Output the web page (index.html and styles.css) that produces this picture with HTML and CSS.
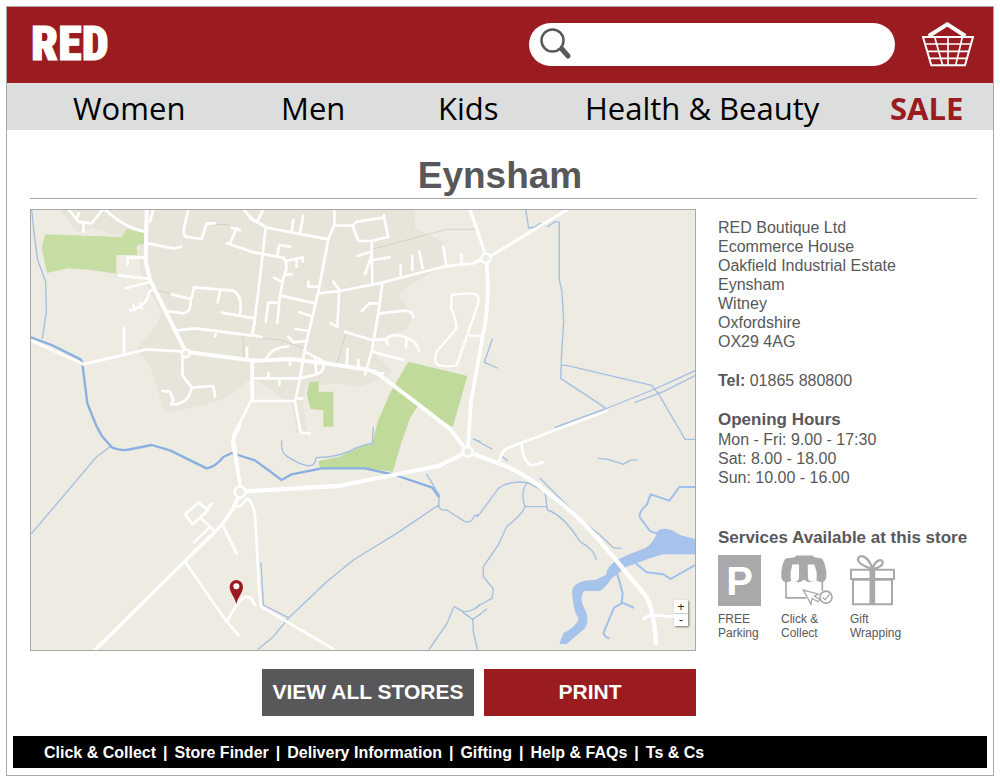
FILE: index.html
```html
<!DOCTYPE html>
<html lang="en">
<head>
<meta charset="utf-8">
<meta name="viewport" content="width=device-width, initial-scale=1">
<title>RED - Eynsham store</title>
<link rel="stylesheet" href="styles.css">
</head>
<body>
<div class="page">
  <header class="masthead">
    <a class="logo" href="#">RED</a>
    <div class="tools">
      <form class="search" role="search">
        <button class="search-go" type="submit" aria-label="Search">
          <svg viewBox="0 0 32 32" width="32" height="32" aria-hidden="true">
            <path d="M21 20L28 28" stroke="#58585a" stroke-width="5" stroke-linecap="round"/>
            <circle cx="12.500" cy="12.500" r="11" fill="#fff" stroke="#58585a" stroke-width="2.500"/>
          </svg>
        </button>
        <input class="search-box" type="text" aria-label="Search the shop">
      </form>
      <a class="basket" href="#" aria-label="Basket">
        <svg viewBox="0 0 156 135" width="52" height="45" fill="none" stroke="#fff" aria-hidden="true">
          <path d="M20 42L76 7L130 42" stroke-width="12"/>
          <path d="M3 45H153L129 130H28Z" stroke-width="6"/>
          <path d="M38 45L62 130M78 45V130M121 45L101 130" stroke-width="5"/>
          <path d="M9 66H147M15 88H141M22 109H134" stroke-width="5"/>
        </svg>
      </a>
    </div>
  </header>

  <nav class="menu" aria-label="Departments">
    <a href="#">Women</a>
    <a href="#">Men</a>
    <a href="#">Kids</a>
    <a href="#">Health &amp; Beauty</a>
    <a class="sale" href="#">SALE</a>
  </nav>

  <main class="content">
    <h1 class="title">Eynsham</h1>
    <div class="columns">
      <section class="left">
        <div class="map">
          <svg class="map-art" viewBox="0 0 1992 1320" role="img" aria-label="Map of Eynsham" fill="none" stroke-linecap="round" stroke-linejoin="round">
            <rect width="1992" height="1320" fill="#eeebe3"/>
            <!-- built-up area -->
            <g transform="translate(-18 -15)" fill="#e7e4da">
              <path d="M105 12L135 50L160 82L200 70L290 95L340 90L345 200L375 260L410 325L395 360L335 430L375 480L400 560L415 610L440 625L480 612L540 600L610 575L675 522L700 530L800 600L815 685L850 690L835 600L840 545L930 535L1010 545L1075 520L1100 500L1040 435L1060 400L1150 370L1165 330L1120 270L1180 225L1260 180L1255 110L1170 70L1170 12Z"/>
            </g>
            <!-- parks -->
            <g transform="translate(-18 -15)" fill="#c6dda4">
              <path d="M60 88L290 96L305 72L360 85V115L335 122L338 150H274V206L200 195L130 190L66 204L50 130Z"/>
            </g>
            <g transform="translate(657 -15)" fill="#c0da9c">
              <path d="M180 530H206V560H250V665H220V616L182 612L170 565Z"/>
              <path d="M475 470L652 513L608 667L505 600L480 640L455 710L428 800L350 790L210 790L205 768L270 755L340 720L366 715L385 645L420 565Z"/>
            </g>
            <!-- footpaths -->
            <g transform="translate(657 -15)" stroke="#c9c6c0" stroke-width="2">
              <path d="M370 132L470 105L590 73H680M40 400L90 405L160 428M286 390L275 430L262 475M-110 60L-70 58L-50 68M-295 252L-235 268M-22 390L-18 460"/>
            </g>
            <!-- streams -->
            <g stroke="#a3bfe2" stroke-width="4">
              <g transform="translate(-18 -15)">
                <path d="M20 15L28 90L38 165L62 230L64 320L52 400"/>
              </g>
              <g transform="translate(1317 -15)">
                <path d="M167 12L176 69L195 66L210 55L222 60M232 65L256 50L268 52V225L276 260L281 350L275 445L272 520L405 608M275 481H290L545 541L565 566L638 690L645 703H675M255 667L405 612L555 552L675 497M495 592L580 560L675 512M67 402L43 472L82 489"/>
              </g>
              <g transform="translate(-18 645)">
                <path d="M255 65L215 95L160 160L20 325"/>
              </g>
              <g transform="translate(657 645)">
                <path d="M95 48Q92 85 112 95Q160 125 180 122Q196 120 198 98Q270 98 320 68L350 58L367 55L370 8M530 148L568 210L566 240L440 325L310 405L230 470L115 580L70 635L25 672M33 412L40 540L115 578M566 240Q568 258 590 255L645 290Q665 295 673 272L688 268M538 672L560 640L590 597L612 545L640 560Q670 560 690 538M640 563L668 583L690 568M668 583L670 620L682 672M672 42L690 50"/>
              </g>
              <g transform="translate(1317 645)">
                <path d="M20 275L30 266L85 190Q120 165 172 173L225 200L232 255Q280 270 330 350Q375 375 378 403M172 173Q150 200 165 245H232M165 245Q160 265 110 305L85 360L40 425V455L70 492L66 520L30 540L18 550M30 568L50 552M10 42L66 72M97 95L112 107M210 160L345 295L390 330L430 368L452 370M385 100L415 103L460 118L480 106L500 104"/>
              </g>
            </g>
            <!-- rivers and lake -->
            <g stroke="#88b0e0" stroke-width="8">
              <g transform="translate(-18 -15)">
                <path d="M18 397L80 420L168 464L172 475L187 595L213 660L230 692L262 728Q290 740 320 732L380 720L435 736L545 790Q570 787 595 756L620 744L690 766L770 825L800 808L890 790H1020L1110 810L1222 848L1240 874" stroke-width="7"/>
              </g>
              <g transform="translate(1317 645)" stroke="#9fc0ec">
                <path d="M675 186H628L598 227L542 208L530 240Q510 255 508 275L540 318L560 325M485 405L530 442L580 448L602 462L675 420M440 440L458 505L455 535L432 548L402 620Q398 632 416 640M455 532L490 548" stroke-width="6"/>
                <path d="M678 343L630 330Q590 300 562 318Q555 350 525 370L485 385L440 405Q410 425 408 450L375 465Q310 465 306 500Q310 560 325 580Q325 600 280 625L268 657H290L345 610Q358 590 348 560Q325 520 342 498H390Q405 490 425 460L470 425L540 400L580 388H678Z" fill="#a5c3eb" stroke="none"/>
              </g>
            </g>
            <!-- roads -->
            <g stroke="#fff" stroke-width="8">
              <g transform="translate(-18 -15)">
                <path d="M365 12L362 170L375 225L482 440L690 467L795 462L900 475L1015 492L1050 500L1180 598L1275 672L1328 740" stroke-width="12"/>
                <path d="M130 12L160 50L200 55L232 15M175 55V80M155 40L162 25M238 12Q300 70 362 80M385 12L375 50M370 115L445 131L468 125M360 158H308V178M282 211L375 222M375 230L303 250M385 252Q370 258 368 280Q350 310 315 316M345 295L350 310M325 300L330 315M297 370V440M440 268L497 282Q500 320 475 325L425 318M500 280L507 247L625 257Q655 275 645 325M585 258L578 292M590 323L690 340M455 376L510 370L590 380L680 392L690 350M572 380L570 395M20 407L175 478L365 433L480 440M472 460V510L500 548L565 543L570 575M500 548Q490 600 438 598L445 585L435 560L413 558M680 467V585L625 690L645 830M666 430V465M490 12L475 80L480 95L530 102L545 55H570M620 68L645 75M635 70L615 115M605 115L690 143M655 12L680 40L725 68"/>
              </g>
              <g transform="translate(657 -15)">
                <path d="M0 40L50 68L235 103M22 50L40 12M125 78L130 45M150 82L160 32M47 70L25 260L8 390L35 396M253 12V60L235 103L205 260L165 430L150 520L135 590L152 683L180 685M253 62H308M402 30V38L320 50L308 62L325 108H365L415 95L402 38M365 112L367 232M365 150L345 208M365 140L322 152M370 165L418 157M205 265L270 258L400 232L580 185L668 175L700 158M452 210V180M487 195V152M518 190L508 140M588 178L580 125M634 175V148M250 230L268 255L262 365L242 355M397 235L385 325L365 440L345 508M385 295H358L335 318M390 325L465 317Q490 318 490 337M285 380L365 405L410 402Q420 390 440 390Q500 400 507 437M410 402L412 418M470 400L468 428M368 440L460 465M0 140L100 158Q118 180 100 220L90 270L82 353M100 158M82 150L88 120L120 125M108 168L158 157V170M140 165V185M98 232L72 218M105 208H125M92 272L195 295M80 293H55L47 350M175 230V245H202M148 322L183 333M137 372L178 378M115 395L130 412L165 408M50 458Q70 425 115 424M165 440L222 470M290 480L293 432M325 485V465M8 465V588H135M8 520H150L200 508Q225 500 220 475M195 460L198 500M55 520V503M88 520V540M120 480V465M138 580H158M372 505H400"/>
                <path d="M605 270Q670 260 680 270Q688 275 685 295L620 480Q600 488 565 480Q548 472 560 440L620 370Q618 340 603 310ZM660 392H696" stroke-width="7"/>
              </g>
              <g transform="translate(1317 -15)">
                <path d="M0 12L45 145M8 175L50 160L295 12" stroke-width="9"/>
                <path d="M50 175Q60 300 38 395L3 590L-7 740" stroke-width="11"/>
                <path d="M410 618L150 715L110 730Q95 740 85 775M155 715Q155 760 180 780Q195 782 218 772"/>
              </g>
              <g transform="translate(-18 645)">
                <path d="M645 0L622 50L645 180" stroke-width="9"/>
                <path d="M645 205L625 250L590 300L205 680" stroke-width="11"/>
                <path d="M645 200L940 183L1240 123L1328 80" stroke-width="13"/>
                <path d="M595 305L635 385M480 410L605 590L642 632M605 590L635 540Q665 500 682 525L690 540M480 268L520 233L550 255L503 298ZM545 252L562 235M528 280L570 320M550 310L508 352M625 242L645 245L668 220Q690 240 692 300L702 490L708 545L925 672" stroke-width="8"/>
              </g>
              <g transform="translate(1317 645)">
                <path d="M-7 80L85 115Q160 140 235 205Q320 265 400 360L525 510Q550 540 558 655" stroke-width="13"/>
                <path d="M520 582L540 570L610 575"/>
              </g>
            </g>
            <!-- roundabouts -->
            <g fill="#eeebe3" stroke="#fff" stroke-width="8">
              <circle cx="464" cy="430" r="12"/>
              <circle cx="1365" cy="145" r="14"/>
              <circle cx="627" cy="846" r="16"/>
              <circle cx="1310" cy="725" r="14"/>
            </g>
            <path d="M616 1182C610 1158 596 1148 596 1130A20 20 0 0 1 636 1130C636 1148 622 1158 616 1182Z" fill="#9b1b20"/>
            <circle cx="616" cy="1129" r="9" fill="#fff"/>
          </svg>
          <div class="zoom">
            <button type="button" aria-label="Zoom in">+</button>
            <button type="button" aria-label="Zoom out">-</button>
          </div>
        </div>
        <div class="actions">
          <button class="action" type="button">VIEW ALL STORES</button>
          <button class="action action-print" type="button">PRINT</button>
        </div>
      </section>

      <aside class="details">
        <address class="block">RED Boutique Ltd<br>Ecommerce House<br>Oakfield Industrial Estate<br>Eynsham<br>Witney<br>Oxfordshire<br>OX29 4AG</address>
        <p class="block"><b>Tel:</b> 01865 880800</p>
        <section class="hours">
          <h2 class="subhead">Opening Hours</h2>
          <p>Mon - Fri: 9.00 - 17:30<br>Sat: 8.00 - 18.00<br>Sun: 10.00 - 16.00</p>
        </section>
        <section>
          <h2 class="subhead">Services Available at this store</h2>
          <ul class="services">
            <li>
              <span class="parking" aria-hidden="true">P</span>
              FREE<br>Parking
            </li>
            <li>
              <svg viewBox="0 0 159 150" width="53" height="50" fill="none" stroke="#a9a9ab" aria-hidden="true">
                <path d="M15 75V127H76M124 75V106" stroke-width="5"/>
                <path d="M40 5L46 0H94L100 5L122 9Q130 15 136 48V65Q134 80 119 80Q108 79 105 72Q100 80 85 80Q75 79 69 72Q60 81 50 80Q38 79 34 72Q28 80 15 80Q3 79 1 65V48Q6 15 14 9Z" fill="#a9a9ab" stroke="none"/>
                <path d="M34 27H54V68Q52 78 42 78Q30 78 29 70V50ZM80 27H100L107 50V68Q104 78 94 78Q83 78 81 68Z" fill="#fff" stroke="none"/>
                <path d="M67 104L90 146L93 129L112 139L116 132L100 122L112 116Z" fill="#fff" stroke-width="4"/>
                <circle cx="135" cy="125" r="18" fill="#fff" stroke-width="5"/>
                <path d="M126 126L132 133L146 116" stroke-width="4"/>
              </svg>
              Click &amp;<br>Collect
            </li>
            <li>
              <svg viewBox="0 0 135 153" width="45" height="51" fill="none" stroke="#a9a9ab" aria-hidden="true">
                <path d="M67 42C45 35 22 25 24 12C27 -2 52 -2 67 40C80 10 98 12 98 23C98 35 82 39 67 42Z" stroke-width="7"/>
                <path d="M3 44H132V72H3ZM9 74H126V148H9Z" stroke-width="6"/>
                <path d="M67 42V148" stroke-width="17"/>
              </svg>
              Gift<br>Wrapping
            </li>
          </ul>
        </section>
      </aside>
    </div>
  </main>

  <footer class="footer">
    <a href="#">Click &amp; Collect</a><span>|</span>
    <a href="#">Store Finder</a><span>|</span>
    <a href="#">Delivery Information</a><span>|</span>
    <a href="#">Gifting</a><span>|</span>
    <a href="#">Help &amp; FAQs</a><span>|</span>
    <a href="#">Ts &amp; Cs</a>
  </footer>
</div>
</body>
</html>
```

FILE: styles.css
```css
* { box-sizing: border-box; }

body {
  margin: 6px;
  background: #fff;
  color: #58585a;
  font: 16px/19px "Liberation Sans", Arial, sans-serif;
}

a { color: inherit; text-decoration: none; }
h1, h2, p, ul { margin: 0; padding: 0; }
button { border: 0; padding: 0; font: inherit; cursor: pointer; }
svg { display: block; }

.page { border: 1px solid #a9a9ab; }

.masthead {
  display: flex;
  align-items: center;
  justify-content: space-between;
  height: 76px;
  padding: 0 19px 2px 24px;
  background: #9b1c20;
}
.logo {
  color: #fff;
  font: 900 48px/52px Impact, "Roboto Condensed", "Open Sans Condensed", Roboto, sans-serif;
  -webkit-text-stroke: 1px #fff;
}
.tools { display: flex; align-items: center; gap: 27px; }
.search {
  display: flex;
  align-items: center;
  width: 366px;
  height: 43px;
  padding: 0 20px 0 11px;
  border-radius: 22px;
  background: #fff;
}
.search-go { background: none; }
.search-box {
  flex: 1;
  min-width: 0;
  height: 32px;
  border: 0;
  outline: 0;
  padding: 0 8px;
  background: none;
  font: inherit;
}

.menu {
  display: grid;
  grid-template-columns: 208fr 157fr 147fr 305fr 76fr;
  padding: 3px 27px 0 66px;
  background: #dcdddd;
  color: #000;
  font: 31px/44px "Open Sans", "Noto Sans", sans-serif;
  white-space: nowrap;
}
.sale { color: #9b1c20; font-weight: 700; }

.content { padding: 0 16px 0 23px; }
.title {
  height: 69px;
  padding: 25px 7px 0 0;
  border-bottom: 1px solid #a9a9ab;
  font-size: 37px;
  line-height: 42px;
  text-align: center;
}
.columns {
  display: grid;
  grid-template-columns: 666fr 259fr;
  gap: 22px;
  padding-top: 10px;
}

.map { position: relative; border: 1px solid #a9a9ab; }
.map-art { width: 100%; height: auto; }
.zoom {
  position: absolute;
  right: 7px;
  bottom: 24px;
  display: grid;
  width: 14px;
  background: #fff;
  box-shadow: 1px 1px 2px #777;
}
.zoom button {
  height: 13px;
  background: none;
  color: #222;
  font-size: 12px;
  line-height: 12px;
}
.zoom button + button { border-top: 1px solid #ccc; }

.actions {
  display: flex;
  justify-content: flex-end;
  gap: 10px;
  padding-top: 18px;
}
.action {
  width: 212px;
  height: 47px;
  padding-bottom: 2px;
  background: #58585a;
  color: #fff;
  font-size: 21px;
  font-weight: 700;
}
.action-print { background: #9b1c20; }

.details { padding-top: 9px; white-space: nowrap; }
.block { margin-bottom: 20px; font-style: normal; }
.hours { margin-bottom: 41px; }
.subhead { font-size: 17px; line-height: 20px; }
.services {
  display: grid;
  grid-template-columns: 63px 69px auto;
  padding-top: 7px;
  list-style: none;
  font-size: 12px;
  line-height: 14px;
}
.services svg { height: 51px; margin-bottom: 6px; }
.parking {
  display: grid;
  place-items: center;
  width: 43px;
  height: 51px;
  margin-bottom: 6px;
  background: #a9a9ab;
  color: #fff;
  font-size: 40px;
  font-weight: 700;
}

.footer {
  display: flex;
  align-items: center;
  gap: 7px;
  height: 32px;
  margin: 20px 6px 7px;
  padding: 0 31px;
  background: #000;
  color: #fff;
  font-weight: 700;
  white-space: nowrap;
}
```
